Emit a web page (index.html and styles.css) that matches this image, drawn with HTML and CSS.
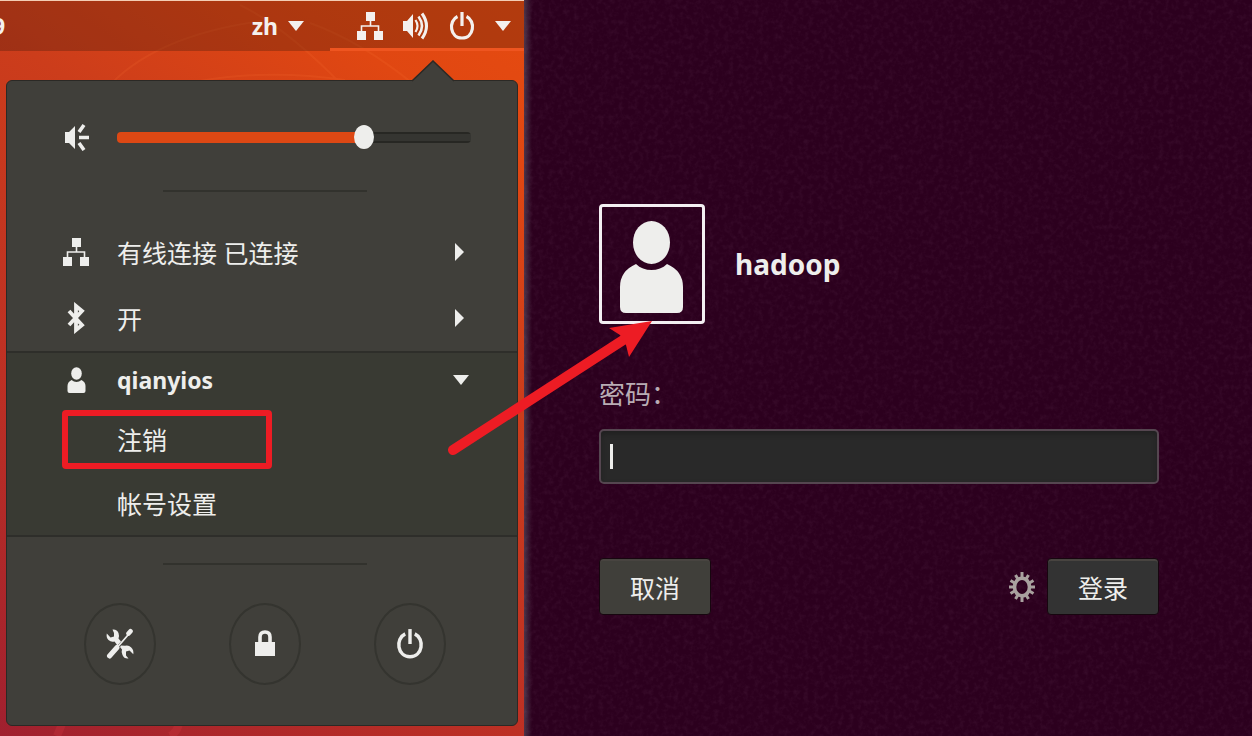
FILE: index.html
```html
<!DOCTYPE html>
<html lang="zh-CN">
<head>
<meta charset="utf-8">
<title>注销并切换用户</title>
<link rel="stylesheet" href="styles.css">
</head>
<body>
<svg class="defs" width="0" height="0" aria-hidden="true">
  <symbol id="network" viewBox="0 0 26 28">
    <path fill="currentColor" d="M9 0h9v9h-9zM0 19h9v9H0zM17 19h9v9h-9z"/>
    <path fill="none" stroke="currentColor" stroke-width="1.6" d="M13.5 8v6M4.500 20v-6h17v6"/>
  </symbol>
  <symbol id="power" viewBox="0 0 26 30">
    <path fill="none" stroke="currentColor" stroke-width="3.2" d="M8.500 5.500C-1 10 1 27 13 27S27 10 17.500 5.500"/>
    <path fill="none" stroke="currentColor" stroke-width="3.200" d="M13 1v14"/>
  </symbol>
  <symbol id="down" viewBox="0 0 16 10"><path fill="currentColor" d="M0 0h16L8 10z"/></symbol>
  <symbol id="right" viewBox="0 0 9 18"><path fill="currentColor" d="M0 0l9 9-9 9z"/></symbol>
</svg>
<main class="page">
  <section class="desktop">
    <svg class="wallpaper" viewBox="0 0 524 736" preserveAspectRatio="none" aria-hidden="true">
      <path d="M112 82Q160 34 262 20M240 4Q285 26 340 82M310 22Q360 40 412 82M200 80Q270 68 345 79" fill="none" stroke="#ff7a3c" stroke-opacity=".14" stroke-width="2"/>
      <path d="M170 736q8-4 9-14M57 736l5-12" fill="none" stroke="#e8404a" stroke-opacity=".2" stroke-width="8"/>
    </svg>
    <header class="topbar">
      <span class="clock">9</span>
      <button class="lang" type="button">zh <svg class="down"><use href="#down"/></svg></button>
      <button class="status" type="button" aria-label="系统菜单">
        <svg class="icon"><use href="#network"/></svg>
        <svg class="icon" viewBox="0 0 26 28"><path fill="currentColor" d="M0 9h4l6-7v24l-6-7H0z"/><g fill="none" stroke="currentColor"><path stroke-width="2.200" d="M12.500 8q4 6 0 12"/><path stroke-width="2.600" d="M15.500 4.500q7 9.500 0 19"/><path stroke-width="3" d="M19 1.500q9 12.500 0 25"/></g></svg>
        <svg class="icon power"><use href="#power"/></svg>
        <svg class="down"><use href="#down"/></svg>
      </button>
    </header>
    <nav class="menu">
      <svg class="notch" viewBox="0 0 42 22" aria-hidden="true"><path d="M0 22v-1.500L21 1l21 19.500V22z" fill="#403f3a"/><path d="M0 21L21 1l21 20" fill="none" stroke="#2b2925" stroke-width="1.500"/></svg>
      <div class="row volume">
        <svg class="icon" viewBox="0 0 28 28"><path fill="currentColor" d="M3 9h4l6-6v23l-6-6H3z"/><path fill="none" stroke="currentColor" stroke-width="3.600" d="M17 9l5-7M17 14.500h10M17 20l5 7"/></svg>
        <input class="slider" type="range" min="0" max="100" value="71" aria-label="音量">
      </div>
      <hr class="rule">
      <div class="devices">
        <button class="row" type="button"><svg class="icon"><use href="#network"/></svg><span>有线连接 已连接</span><svg class="right"><use href="#right"/></svg></button>
        <button class="row" type="button"><svg class="icon bluetooth" viewBox="0 0 28 30"><path fill="none" stroke="currentColor" stroke-width="3.800" d="M7 8l13 14-6 5V3l6 5-13 14"/></svg><span>开</span><svg class="right"><use href="#right"/></svg></button>
      </div>
      <div class="account">
        <button class="row user" type="button"><svg class="icon" viewBox="0 0 28 28"><ellipse cx="14.500" cy="7.500" rx="5.300" ry="6.200" fill="currentColor"/><path fill="currentColor" d="M9.500 14q5 4 10 0 4 2 4 6v5q0 2-2 2h-14q-2 0-2-2v-5q0-4 4-6z"/></svg><strong>qianyios</strong><svg class="down"><use href="#down"/></svg></button>
        <button class="row sub marked" type="button">注销</button>
        <button class="row sub" type="button">帐号设置</button>
      </div>
      <hr class="rule lower">
      <div class="actions">
        <button class="round" type="button" aria-label="设置"><svg class="glyph" viewBox="0 0 28 32"><path fill="currentColor" d="M6.500 1.500Q11 1 12.500 5q1 3 0 5.500l2.500 3-3.500 4-3-4Q5 14.500 2.500 12 0 9.500.8 5.500L4.500 9.500 8 8.500V5zM15 17.500l4 .2q3.500-1 6 1.500 3 2.500 2.300 7L23.500 22.500 20 23.500v4l2.500 3Q18 31 16.500 27q-1.500-3-.5-5.500L14 19z"/><g fill="none" stroke="currentColor" stroke-linecap="round"><path stroke-width="5" d="M3.500 28l7.500-8.500"/><path stroke-width="1.800" d="M12 18.500L22 7"/><path stroke-width="4.600" d="M22.500 5.500l2-2.300"/></g></svg></button>
        <button class="round" type="button" aria-label="锁定"><svg class="glyph" viewBox="0 0 28 32"><path fill="currentColor" d="M4 14h20v14H4z"/><path fill="none" stroke="currentColor" stroke-width="3.600" d="M9 15V9q0-5 5-5t5 5v6"/></svg></button>
        <button class="round" type="button" aria-label="关机"><svg class="glyph"><use href="#power"/></svg></button>
      </div>
    </nav>
  </section>
  <section class="login">
    <svg class="grain" aria-hidden="true"><filter id="grain"><feTurbulence type="fractalNoise" baseFrequency=".2" numOctaves="3"/><feColorMatrix values="0 0 0 0 .55  0 0 0 0 .3  0 0 0 0 .5  0 0 0 1.200 -.5"/></filter><rect width="100%" height="100%" filter="url(#grain)"/></svg>
    <form class="form">
      <div class="identity">
        <div class="avatar">
          <svg class="portrait" viewBox="0 0 100 114" aria-hidden="true"><ellipse cx="49.500" cy="35.500" rx="18.500" ry="21.500" fill="#eeeeec"/><path fill="#eeeeec" d="M34 57C42 65 57 65 65 57Q81 64 81 80V100Q81 106 75 106H24Q18 106 18 100V80Q18 64 34 57z"/></svg>
          <svg class="arrow" viewBox="440 310 220 150" aria-hidden="true"><path d="M453 450L624 339.500" stroke="#ed1c24" stroke-width="10" stroke-linecap="round"/><path d="M652 321L609 328l11 7 6 10 3 12z" fill="#ed1c24"/></svg>
        </div>
        <strong class="name">hadoop</strong>
      </div>
      <label class="label" for="password">密码：</label>
      <div class="field"><input class="password" id="password" type="password"><span class="cursor"></span></div>
      <div class="buttons">
        <button class="button cancel" type="button">取消</button>
        <button class="options" type="button" aria-label="会话选项"><svg class="gear" viewBox="0 0 28 32"><ellipse cx="14" cy="16" rx="7.500" ry="8.800" fill="none" stroke="currentColor" stroke-width="3.600"/><path fill="none" stroke="currentColor" stroke-width="3" d="M14 1v6M14 25v6M1 16h5M22 16h5M7.500 4l3 5M17.500 23l3 5M20.500 4l-3 5M10.500 23l-3 5M2.500 9.500l5 3M20.500 19.500l5 3M25.500 9.500l-5 3M7.500 19.500l-5 3"/></svg></button>
        <button class="button" type="submit">登录</button>
      </div>
    </form>
  </section>
</main>
</body>
</html>
```
FILE: styles.css
```css
* { box-sizing: border-box; }
body {
  margin: 0;
  font-family: "Noto Sans", "Noto Sans CJK SC", sans-serif;
  font-size: 25px;
  color: #eeeeec;
  background: #2c001e;
}
button {
  font: inherit;
  color: inherit;
  border: 0;
  padding: 0;
  background: none;
}
svg { display: block; flex: none; }
.defs { position: absolute; }
.page {
  display: grid;
  grid-template-columns: minmax(0, 524fr) minmax(0, 728fr);
  min-height: 100vh;
}

.desktop {
  position: relative;
  display: flex;
  flex-direction: column;
  border-top: 1px solid #f3cdb4;
  background: linear-gradient(215deg, #e64b10 0%, #e04712 15%, #cc3d1b 36%, #bd3024 67%, #a0202f 100%);
}
.wallpaper { position: absolute; inset: 0; width: 100%; height: 100%; }
.topbar {
  position: relative;
  display: flex;
  height: 50px;
  background: rgba(60, 24, 10, .3);
  overflow: hidden;
  color: #f4f0ee;
  font-size: 23px;
  font-weight: 700;
}
.clock { margin-left: -8px; line-height: 50px; }
.lang { display: flex; align-items: center; gap: 10px; margin-left: auto; padding-right: 26px; }
.down { width: 16px; height: 10px; }
.status {
  display: flex;
  align-items: center;
  gap: 20px;
  padding: 0 13px 0 27px;
  box-shadow: inset 0 -3px #ef5520;
}
.status .icon { width: 26px; height: 28px; }
.status .power { height: 30px; }

.menu {
  position: relative;
  flex: 1;
  margin: 29px 6px 10px;
  padding-top: 23px;
  border: 1px solid #2b2925;
  border-radius: 6px;
  background: #403f3a;
}
.notch { position: absolute; top: -21px; right: 63px; width: 42px; height: 22px; }
.row {
  position: relative;
  display: flex;
  align-items: center;
  gap: 27px;
  width: 100%;
  height: 66px;
  padding: 0 46px 0 55px;
  text-align: left;
}
.row .icon { width: 28px; height: 28px; }
.row .bluetooth { height: 32px; }
.row > .right { width: 9px; height: 18px; margin: 0 7px 0 auto; }
.row > .down { margin-left: auto; margin-right: 2px; }
.slider {
  flex: 1;
  min-width: 0;
  height: 26px;
  margin: 0;
  appearance: none;
  background: none;
}
.slider::-webkit-slider-runnable-track {
  height: 11px;
  border-radius: 4px;
  background:
    linear-gradient(90deg, #dd4814 70%, transparent 70%),
    linear-gradient(#272723 2px, #353531 2px, #353531 9px, #272723 9px);
}
.slider::-webkit-slider-thumb {
  appearance: none;
  width: 20px;
  height: 24px;
  margin-top: -7px;
  border-radius: 50%;
  background: #eeeeec;
}
.rule {
  width: 204px;
  height: 2px;
  margin: 20px 0 27px 156px;
  border: 0;
  background: #32322d;
}
.account {
  border: solid #2e2e2a;
  border-width: 2px 0;
  background: #393a33;
}
.account .row { height: 64px; }
.account .user { height: 54px; font-size: 23px; }
.account .sub { padding-left: 110px; }
.marked::after {
  content: "";
  box-sizing: border-box;
  position: absolute;
  top: 3px;
  bottom: 2px;
  left: 55px;
  width: 210px;
  border: 6px solid #ed1c24;
  border-radius: 4px;
}
.lower { margin-top: 26px; margin-bottom: 38px; }
.actions { display: flex; justify-content: center; gap: 73px; padding: 0 0 40px 5px; }
.round {
  display: grid;
  place-items: center;
  width: 72px;
  height: 82px;
  border: 2px solid #34342f;
  border-radius: 50%;
}
.glyph { width: 28px; height: 32px; }

.login {
  position: relative;
  padding: 204px 93px 40px 75px;
  background: linear-gradient(90deg, #4b3448, #2c001e 8px);
}
.grain { position: absolute; inset: 0; width: 100%; height: 100%; opacity: .12; }
.form { position: relative; }
.identity { display: flex; align-items: center; gap: 30px; }
.avatar {
  position: relative;
  width: 106px;
  height: 120px;
  border: 3px solid #f3eff2;
  border-radius: 4px;
}
.portrait { width: 100px; height: 114px; }
.arrow { position: absolute; left: -162px; top: 103px; width: 220px; height: 150px; }
.name { font-size: 28px; }
.label {
  display: block;
  margin-top: 52px;
  font-size: 26px;
  line-height: 36px;
  color: #b9adb4;
}
.field { position: relative; margin-top: 17px; }
.password {
  display: block;
  width: 100%;
  height: 55px;
  padding: 0 12px;
  border: 2px solid #554650;
  border-radius: 5px;
  outline: 0;
  background: #292929;
  box-shadow: inset 0 3px 5px #202020;
  color: #eeeeec;
  font: inherit;
}
.cursor { position: absolute; top: 15px; left: 11px; width: 3px; height: 25px; background: #eeeeec; }
.buttons { display: flex; align-items: center; margin-top: 74px; }
.button {
  width: 112px;
  height: 57px;
  border: 1px solid #17060f;
  border-radius: 4px;
  background: #333;
  box-shadow: inset 0 2px #484440;
}
.cancel { background: #403f3a; }
.options { margin: 0 11px 0 auto; color: #a9a19f; }
.gear { width: 28px; height: 32px; }
```
